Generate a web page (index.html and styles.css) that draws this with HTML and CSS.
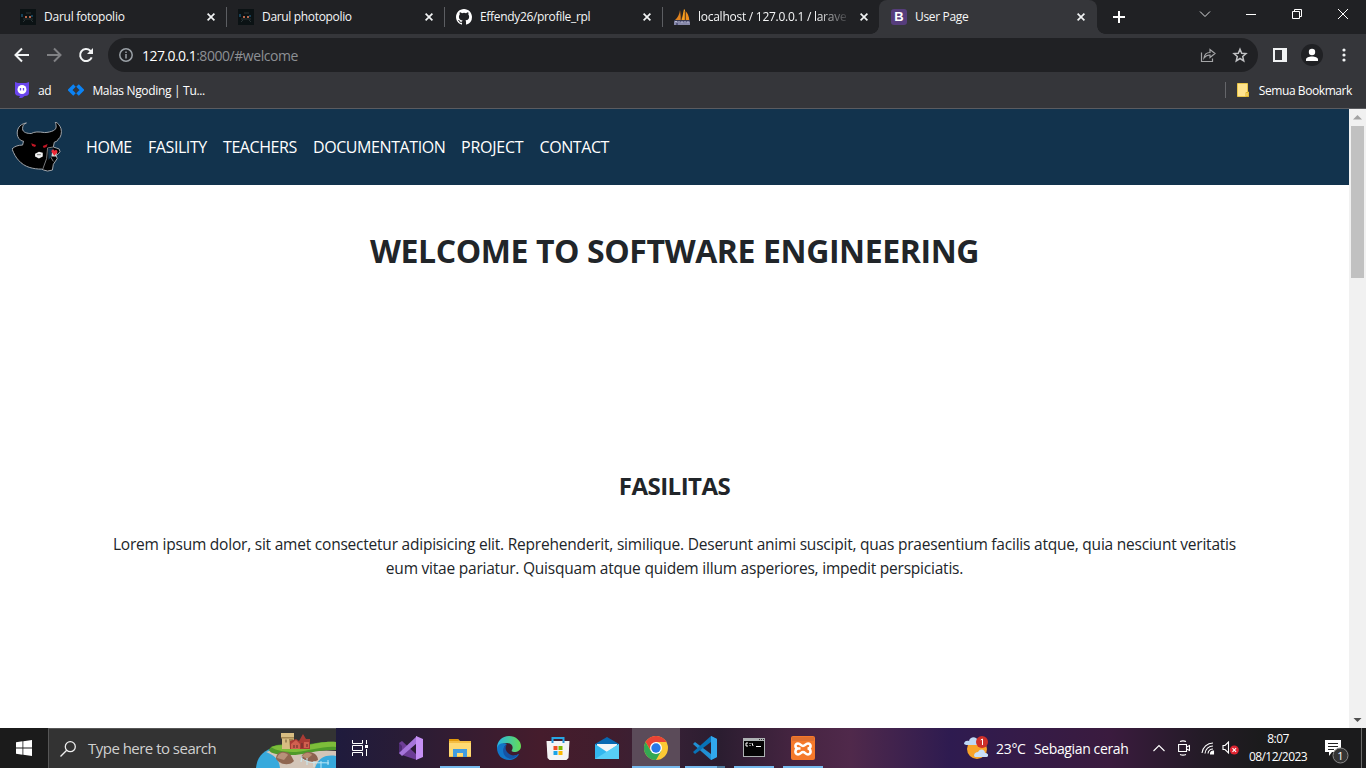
FILE: index.html
```html
<!DOCTYPE html>
<html lang="id">
<head>
<meta charset="utf-8">
<title>User Page</title>
<link rel="stylesheet" href="styles.css">
</head>
<body>
<div class="screen">
  <header class="tabstrip">
    <div class="tab">
      <svg class="favicon" viewBox="0 0 16 16"><rect width="16" height="16" fill="#0b1214"/><path d="M1 5v3h2V5zM11 6h2v2h-2z" fill="#174057"/><path d="M5 7h2v2H5zM9 7h2v2H9z" fill="#b5674c"/><path d="M3 10h10M3 13l2-2M13 13l-2-2M6 4h5" stroke="#2c3537" fill="none"/></svg>
      <span class="tab-title t-1">Darul fotopolio</span>
      <svg class="close" viewBox="0 0 8 8"><path d="M.6.6l6.8 6.8M7.4.6L.6 7.4"/></svg>
    </div>
    <div class="tab">
      <svg class="favicon" viewBox="0 0 16 16"><rect width="16" height="16" fill="#0b1214"/><path d="M1 5v3h2V5zM11 6h2v2h-2z" fill="#174057"/><path d="M5 7h2v2H5zM9 7h2v2H9z" fill="#b5674c"/><path d="M3 10h10M3 13l2-2M13 13l-2-2M6 4h5" stroke="#2c3537" fill="none"/></svg>
      <span class="tab-title t-2">Darul photopolio</span>
      <svg class="close" viewBox="0 0 8 8"><path d="M.6.6l6.8 6.8M7.4.6L.6 7.4"/></svg>
    </div>
    <div class="tab">
      <svg class="favicon" viewBox="0 0 16 16"><path fill="#fff" d="M8 0C3.58 0 0 3.58 0 8c0 3.54 2.29 6.53 5.47 7.59.4.07.55-.17.55-.38v-1.49c-2.01.37-2.53-.49-2.69-.94-.09-.23-.48-.94-.82-1.13-.28-.15-.68-.52-.01-.53.63-.01 1.08.58 1.23.82.72 1.21 1.87.87 2.33.66.07-.52.28-.87.51-1.07-1.78-.2-3.64-.89-3.64-3.95 0-.87.31-1.59.82-2.15-.08-.2-.36-1.02.08-2.12 0 0 .67-.21 2.2.82a7.6 7.6 0 014 0c1.53-1.04 2.2-.82 2.2-.82.44 1.1.16 1.92.08 2.12.51.56.82 1.27.82 2.15 0 3.07-1.87 3.75-3.65 3.95.29.25.54.73.54 1.48v2.2c0 .21.15.46.55.38A8.01 8.01 0 0016 8c0-4.42-3.58-8-8-8z"/></svg>
      <span class="tab-title t-3">Effendy26/profile_rpl</span>
      <svg class="close" viewBox="0 0 8 8"><path d="M.6.6l6.8 6.8M7.4.6L.6 7.4"/></svg>
    </div>
    <div class="tab no-sep">
      <svg class="favicon" viewBox="0 0 16 16"><path d="M6 1C5.500 5 4 8.500 1 11h6.500z" fill="#e08320"/><path d="M10 0C9 4 8.500 8 7.500 11H11V1z" fill="#f9a01f"/><path d="M11.500 2c2 2 3.500 5 3.800 9h-3.800z" fill="#ef8e1c"/><path d="M7 3v8M11.200 2v9" stroke="#503018" stroke-width=".7"/><path d="M0 11.500h16V16H0z" fill="#565980"/><path d="M1 16v-3.500h2V14M5 12v4M7 16v-3h2v3M11 12v4M13 16v-3h2v3" stroke="#b9bbd4" fill="none"/></svg>
      <span class="tab-title faded t-4">localhost / 127.0.0.1 / larave</span>
      <svg class="close" viewBox="0 0 8 8"><path d="M.6.6l6.8 6.8M7.4.6L.6 7.4"/></svg>
    </div>
    <div class="tab active">
      <span class="favicon bootstrap">B</span>
      <span class="tab-title t-5">User Page</span>
      <svg class="close" viewBox="0 0 8 8"><path d="M.6.6l6.8 6.8M7.4.6L.6 7.4"/></svg>
    </div>
    <svg class="new-tab" viewBox="0 0 12 12"><path d="M6 0v12M0 6h12" stroke="#fff" stroke-width="2"/></svg>
    <div class="window-buttons">
      <svg viewBox="0 0 46 28"><path d="M18 11.500l5 5 5-5" /></svg>
      <svg viewBox="0 0 46 28"><path d="M18 14.500h10" stroke="#fff"/></svg>
      <svg viewBox="0 0 46 28"><path d="M18.500 11.500h7v7h-7zM20.500 11V9.500h7v7H26" stroke="#fff"/></svg>
      <svg viewBox="0 0 46 28"><path d="M18 9l10 10M28 9L18 19" stroke="#fff"/></svg>
    </div>
  </header>

  <div class="toolbar">
    <svg class="nav-icon" viewBox="0 0 16 16"><path d="M15 8H2M8 1.500L1.500 8 8 14.500" stroke="#f1f3f4"/></svg>
    <svg class="nav-icon" viewBox="0 0 16 16"><path d="M1 8h13M8 1.500L14.500 8 8 14.500" stroke="#808184"/></svg>
    <svg class="nav-icon" viewBox="0 0 16 16"><path d="M13.700 10.300A6 6 0 1112.300 3.700L14 5.500" stroke="#f1f3f4"/><path d="M15 1v6H9z" fill="#f1f3f4" stroke="none"/></svg>
    <div class="omnibox">
      <svg class="info" viewBox="0 0 14 14"><circle cx="7" cy="7" r="6.200"/><path d="M7 6v4.500M7 3.500V5"/></svg>
      <span class="url"><b>127.0.0.1</b><i>:8000/#welcome</i></span>
      <svg class="share" viewBox="0 0 16 16"><path d="M1.500 5.500v9h11v-3M4 11c.5-4 2.500-5.500 6-5.500V2.500l5 4-5 4V8C7 8 5.500 9 4 11z"/></svg>
      <svg class="star" viewBox="0 0 16 16"><path d="M8 2.200l1.700 4 4.300.4-3.300 2.900 1 4.300L8 11.500l-3.700 2.300 1-4.300L2 6.600l4.300-.4z"/></svg>
    </div>
    <svg class="side-panel" viewBox="0 0 14 14"><path fill="#f1f3f4" fill-rule="evenodd" d="M0 0h14v14H0zM2 2v10h7V2z"/></svg>
    <svg class="profile" viewBox="0 0 22 22"><circle cx="11" cy="11" r="11" fill="#202124"/><circle cx="11" cy="8" r="3.200" fill="#fff"/><path d="M5 17v-1.500c0-4 12-4 12 0V17z" fill="#fff"/></svg>
    <svg class="dots" viewBox="0 0 4 14"><circle cx="2" cy="2" r="1.600"/><circle cx="2" cy="7" r="1.600"/><circle cx="2" cy="12" r="1.600"/></svg>
  </div>

  <div class="bookmarks">
    <svg class="bm-ad" viewBox="0 0 16 16"><path d="M1 0l3 1h8l3-1v11c0 2-1.500 3-4 3-1 0-2 2-4 2H5l1-2c-3 0-5-1-5-3z" fill="#6a45ee"/><circle cx="8" cy="7.500" r="4.500" fill="#fff"/><path d="M6.500 6v2.500M9.500 6v2.500" stroke="#6a45ee" stroke-width="1.300"/></svg>
    <span class="bm-text b-1">ad</span>
    <svg class="bm-mn" viewBox="0 0 16 12"><path d="M6.500 1.500L2 6l4.500 4.500M9.500 1.500L14 6l-4.500 4.500" stroke="#0b83f5" stroke-width="3.600" fill="none"/></svg>
    <span class="bm-text b-2">Malas Ngoding | Tu...</span>
    <div class="all-bookmarks">
      <svg class="folder" viewBox="0 0 12 14"><path d="M.5.5h10V9h1v4.500H.5z" fill="#ffe48f" stroke="#e9c649"/><path d="M9 13.500V9.500h2v4z" fill="#ffe48f" stroke="#e0b52d"/></svg>
      <span class="bm-text b-3">Semua Bookmark</span>
    </div>
  </div>

  <div class="viewport">
    <main class="page">
      <nav class="navbar">
        <svg class="brand" viewBox="0 0 52 52">
          <path d="M15 1C7 2 4 9 6 15c1 3 4 5 6 5l-1 4c-4 0-8 1-11 4 2 5 4 9 7 12 6 7 15 9 24 9l2 1 4 1 5-1 1-6 4-6-1-3 4-4-1-3-3-1-3-1 1-5c3-1 4-2 4-3 3-2 4-7 3-11-1-3-3-6-6-7 1 4 2 7-2 9-2 1-6 2-9 2-6-1-11-1-14 1-4 0-9-1-9-5 0-3 1-5 4-6z" fill="#000" stroke="#a7abb0" stroke-width="1"/>
          <path d="M20 22l5 2-1 2-3-1zM37 23l-5 2 1 2 3-1z" fill="#c01724"/>
          <path d="M24 33l4-2 4 1v4l-4 2-4-2z" fill="#f0f0f0"/><path d="M26 34h4" stroke="#777"/>
          <path d="M43 26l-6 1-1 11-4 11M40 36l3 5" stroke="#9a9da1" stroke-width=".8" fill="none"/>
          <path d="M37.500 27.500h5.500l-1 7-4 5z" fill="#12334d"/>
          <path d="M41 36l1-6 5 1-1 5z" fill="#d8d8d8"/><path d="M41 31c0-3 3-3 3-1 2-2 4 0 3 2l-3 3z" fill="#ef2936"/>
        </svg>
        <a class="n-1">HOME</a>
        <a class="n-2">FASILITY</a>
        <a class="n-3">TEACHERS</a>
        <a class="n-4">DOCUMENTATION</a>
        <a class="n-5">PROJECT</a>
        <a class="n-6">CONTACT</a>
      </nav>
      <h1><span>WELCOME TO SOFTWARE ENGINEERING</span></h1>
      <h2><span>FASILITAS</span></h2>
      <p><span class="p-1">Lorem ipsum dolor, sit amet consectetur adipisicing elit. Reprehenderit, similique. Deserunt animi suscipit, quas praesentium facilis atque, quia nesciunt veritatis</span><br><span class="p-2">eum vitae pariatur. Quisquam atque quidem illum asperiores, impedit perspiciatis.</span></p>
    </main>
    <div class="scrollbar">
      <svg viewBox="0 0 17 17"><path d="M4 10.500h9L8.500 6z" fill="#a3a3a3"/></svg>
      <div class="thumb"></div>
      <svg class="down" viewBox="0 0 17 17"><path d="M4.500 7h8L8.500 11z" fill="#505050"/></svg>
    </div>
  </div>

  <footer class="taskbar">
    <div class="start"><svg viewBox="0 0 16 16"><path fill="#fff" d="M0 2.200L6.500 1.300v6.300H0zM7.300 1.200L16 0v7.600H7.300zM0 8.400h6.500v6.300L0 13.800zM7.300 8.400H16V16l-8.700-1.200z"/></svg></div>
    <div class="search">
      <svg class="lens" viewBox="0 0 16 16"><circle cx="10.300" cy="5.700" r="5"/><path d="M6.700 9.300L.5 15.500"/></svg>
      <span class="search-text">Type here to search</span>
      <svg class="castle" viewBox="0 0 80 38">
        <path d="M0 38C1 27 7 20 20 17l60 7v14z" fill="#37a9dc"/>
        <path d="M10 22c8-3 14-1 24 0 16 1 30-3 46-1v5c-12-2-18 3-21 12H24C23 30 20 26 10 22z" fill="#d3c5b8"/>
        <path d="M13 20c2-6 14-6 25-5 14 1 24-4 42-3v8c-18-1-30 5-46 5-10 0-20-1-21-5z" fill="#4f9a2b"/>
        <path d="M15 17c9-4 22 0 33-1 12-2 20-5 32-4v5c-14-1-26 4-40 5-10 0-20-1-25-5z" fill="#7dbd3a"/>
        <path d="M25 3h13v5l-1 11H26V8l-1-1z" fill="#d8bd82"/><path d="M25 7h13v1.500H25zM33 9h4v10h-3z" fill="#a38650"/><path d="M30 9.500v3" stroke="#6b5430"/>
        <path d="M34 11l6-2 3 2 4-7 3 5h4v10H34z" fill="#a93b34"/><path d="M35 14l5-4 4 4v5h-9zM48 12h5v6h-5z" fill="#d0604f"/><path d="M38 18v-3M41 18v-3M46 18v-5M51 17v-3" stroke="#632e2b"/>
        <path d="M20 29c0-6 5-8 9-7 5 0 7 5 9 9-4 5-14 4-18-2z" fill="#8f6650"/><path d="M21 28c2-7 9-6 11-3l-4 5z" fill="#b8917a"/>
        <path d="M45 28c1-6 8-7 12-5 3 1 5 4 5 7-5 3-13 2-17-2z" fill="#8d6350"/><path d="M46 26c4-5 9-3 10-1l-5 4z" fill="#b98b70"/>
        <path d="M46 26l-1 6M51 28v7M58 31v6M65 31v7M72 30v5M45 28c10 7 17 4 28 5" stroke="#c8edf8" stroke-width=".9" fill="none"/>
      </svg>
    </div>
    <div class="task view"><svg width="18" height="16" viewBox="0 0 18 16"><path d="M1.500 0v3.500h10V0M1.500 16v-3.500h10V16M1.500 5.500h10v5h-10zM15.500 0v4M15.500 9v7" stroke="#fff" fill="none"/><path d="M14 5h3v3h-3z" fill="#fff"/></svg></div>
    <div class="apps">
      <div class="task"><svg viewBox="0 0 24 24"><path d="M0 7l3-2 15 14v5L3 19l-3-2z" fill="#6d3d96"/><path d="M0 7l3 3v5l-3 3z" fill="#4f2b74"/><path d="M0 17L18 0v7L3 20z" fill="#a675da"/><path d="M17 0l7 3v18l-7 3z" fill="#c690f5"/></svg></div>
      <div class="task"><svg viewBox="0 0 24 24"><path d="M1 3h9l2 2h11v16H1z" fill="#f5be43"/><path d="M1 3h9l1 2H1z" fill="#e29a0b"/><path d="M1 7h22v13H1z" fill="#ffda73"/><path d="M5 21v-8h14v8h-4v-4H9v4z" fill="#419ce0"/></svg><i></i></div>
      <div class="task"><svg viewBox="0 0 24 24"><defs><linearGradient id="edge" x2="1"><stop stop-color="#27b5e7"/><stop offset="1" stop-color="#65dc55"/></linearGradient></defs><path d="M0 12C0 5 5 0 12 0s12 5 12 10c0 4-3 6-7 6-2 0-3-1-2-2 2-4-1-7-5-7C5 7 1 10 0 14z" fill="url(#edge)"/><path d="M0 12c1-4 5-6 10-4-4 2-3 7 0 10 4 3 8 2 12 0-2 4-6 6-10 6C5 24 0 19 0 12z" fill="#1176c8"/><path d="M10 8c-5 3-5 9-1 13 4 3 9 2 13-3-4 2-8 2-11-1s-3-6-1-9z" fill="#1553a4"/></svg></div>
      <div class="task"><svg viewBox="0 0 24 24"><path d="M6.500 6V2h11v4" fill="none" stroke="#27a6e4" stroke-width="2"/><path d="M.5 5h23l-1 17-2 2h-17l-2-2z" fill="#f4f4f4"/><path d="M5.500 5h2v2h-2zM16.500 5h2v2h-2z" fill="#2695db"/><path d="M7.500 10h4v4h-4z" fill="#ef4c23"/><path d="M12.500 10h4v4h-4z" fill="#7fb900"/><path d="M7.500 15h4v4h-4z" fill="#1ba4e8"/><path d="M12.500 15h4v4h-4z" fill="#fdb900"/></svg></div>
      <div class="task"><svg viewBox="0 0 24 24"><path d="M0 8l12-7 12 7v7H0z" fill="#0768b2"/><path d="M2 8h20v8H2z" fill="#f1f4f7"/><path d="M0 8l12 8 12-8v15H0z" fill="#32b7ef"/><path d="M0 23L24 8v15z" fill="#57cef7"/></svg></div>
      <div class="task current"><svg viewBox="0 0 24 24"><circle cx="12" cy="12" r="12" fill="#fcc934"/><path d="M1.600 6A12 12 0 0122.400 6H12L7 15z" fill="#e94335"/><path d="M1.600 6A12 12 0 0012 24l5.200-9H6.800z" fill="#34a853"/><circle cx="12" cy="12" r="6" fill="#fff"/><circle cx="12" cy="12" r="4.700" fill="#2878e8"/></svg><i></i></div>
      <div class="task double"><svg viewBox="0 0 24 24"><path d="M18 0l6 3v18l-6 3L0 8l2-2 16 12z" fill="#218fd3"/><path d="M0 16L18 0v6L2 18z" fill="#0873b8"/><path d="M18 0l6 3v18l-6 3z" fill="#31a7ec"/></svg><i></i></div>
      <div class="task"><svg viewBox="0 0 24 24"><path d="M1 2h22v19H1z" fill="#aeb3b4"/><path d="M2 5h20v15H2z" fill="#050505"/><path d="M17 3.500h1M19 3.500h1M21 3.500h1" stroke="#333"/><path d="M6 7H4v3h2M8 7v1M8 9v1M10 7l1 3M14 10.500h5" stroke="#fff" fill="none"/></svg><i></i></div>
      <div class="task"><svg viewBox="0 0 24 24"><rect width="24" height="24" rx="2" fill="#f5792b"/><path d="M1 1h22v4H1z" fill="#df702f"/><path d="M9.500 12.500H7.500C3.500 12.500 3.500 7.500 7 7.500c2.500 0 3 2.500 5 2.500s2.500-2.500 5-2.500c3.500 0 3.500 5-.5 5 4 0 4 6 .5 6-2.500 0-3-2.500-5-2.500s-2.500 2.500-5 2.500c-3.500 0-3.500-6 .5-6" fill="none" stroke="#fff" stroke-width="2.600"/></svg><i></i></div>
    </div>
    <div class="weather">
      <svg viewBox="0 0 24 24"><circle cx="13" cy="13" r="10" fill="#f8a329"/><path d="M0 8c0-3 3-4 5-3 1-5 8-5 9 0 3 0 4 3 2 4H2z" fill="#bfd8f4"/><path d="M10 20c0-3 2-4 4-4 2-4 7-3 7 1 4 0 4 4 1 4H11z" fill="#cae0f8"/><circle cx="18" cy="6" r="6" fill="#cf3029"/><path d="M16.800 4l1.700-1v6" stroke="#fff" fill="none"/></svg>
      <span class="temp">23°C</span><span class="cond">Sebagian cerah</span>
    </div>
    <div class="tray">
      <svg class="chev" viewBox="0 0 12 8"><path d="M.5 7L6 1.500 11.500 7"/></svg>
      <svg class="cam" viewBox="0 0 12 16"><path d="M2 1.500Q5 .3 8 1.500M2 14.500q3 1.200 6 0M.6 4.500h7.900v7H.6zM8.500 7l3-1.500v5l-3-1.500" /></svg>
      <svg class="wifi" viewBox="0 0 14 14"><path d="M1 12A11 11 0 0112 2M4 12.500a8 8 0 018-7.500M7 12.500a5 5 0 015-4.500"/><path d="M9.500 13a3 3 0 013-3v3z" fill="#fff"/></svg>
      <svg class="sound" viewBox="0 0 17 14"><path d="M1 4.500h2L6.500 1v11L3 8.500H1z"/><circle cx="12.300" cy="9" r="4.500" fill="#df2431" stroke="none"/><path d="M10.500 7.200l3.600 3.600M14.100 7.200l-3.600 3.600"/></svg>
    </div>
    <div class="clock"><span class="c-1">8:07</span><span class="c-2">08/12/2023</span></div>
    <div class="notice"><svg viewBox="0 0 24 24"><path d="M0 0h16v12H7l-3 4v-4H0z" fill="#fff"/><path d="M3 3.500h10M3 6.500h10M3 9.500h6" stroke="#222"/><circle cx="15.500" cy="15.500" r="7.500" fill="#343434" stroke="#898989"/></svg><b>1</b></div>
    <div class="peek"></div>
  </footer>
</div>
</body>
</html>
```
FILE: styles.css
```css
* { box-sizing: border-box; }
body { margin: 0; font-family: "Open Sans", "Noto Sans", sans-serif; }
svg { display: block; flex: none; }
.screen { width: 1366px; height: 768px; display: flex; flex-direction: column; overflow: hidden; white-space: nowrap; }

/* Tabs */
.tabstrip { height: 34px; background: #202124; display: flex; align-items: center; padding-left: 8px; flex: none; }
.tab { width: 218px; height: 34px; display: flex; align-items: center; padding: 0 11px 0 12px; position: relative; flex: none; color: #f5f6f7; font-size: 12px; }
.tab::after { content: ""; position: absolute; right: -1px; top: 7px; width: 1px; height: 20px; background: #5c5e62; }
.tab.no-sep::after { display: none; }
.favicon { width: 16px; height: 16px; margin-right: 8px; flex: none; }
.tab-title { width: 148px; flex: none; line-height: 20px; letter-spacing: -0.25px; }
.t-2, .t-3 { letter-spacing: -0.33px; }
.t-4 { letter-spacing: -0.26px; }
.t-5 { letter-spacing: -0.33px; width: 147px; }
.faded { -webkit-mask-image: linear-gradient(90deg, #000 80%, rgba(0, 0, 0, .15)); mask-image: linear-gradient(90deg, #000 80%, rgba(0, 0, 0, .15)); }
.close { width: 8px; height: 8px; margin-left: 15px; stroke: #f1f3f4; stroke-width: 1.7; }
.no-sep .close { margin-left: 14px; }
.tab.active { background: #35363a; border-radius: 8px 8px 0 0; margin-left: -1px; width: 218px; }
.tab.active .close { margin-left: 15px; }
.tab.active::before, .tab.active::after { content: ""; display: block; position: absolute; top: auto; bottom: 0; width: 8px; height: 8px; background: radial-gradient(circle at 0 0, transparent 7.5px, #35363a 8px); left: -8px; }
.tab.active::after { left: auto; right: -8px; background: radial-gradient(circle at 100% 0, transparent 7.5px, #35363a 8px); }
.bootstrap { background: #563d7c; border-radius: 3px; color: #fff; font: bold 13px/16px "Liberation Sans", sans-serif; text-align: center; }
.new-tab { width: 12px; height: 12px; margin-left: 16px; }
.window-buttons { margin-left: auto; display: flex; align-self: flex-start; }
.window-buttons svg { width: 46px; height: 28px; fill: none; stroke: #dadbdd; }

/* Toolbar */
.toolbar { height: 42px; background: #35363a; display: flex; align-items: center; padding-left: 14px; flex: none; }
.nav-icon { width: 16px; height: 16px; margin-right: 16px; fill: none; stroke-width: 2; }
.omnibox { width: 1150px; height: 34px; border-radius: 17px; background: #202124; margin-left: -2px; display: flex; align-items: center; padding: 0 10px 0 11px; flex: none; }
.info { width: 14px; height: 14px; stroke: #9aa0a6; stroke-width: 1.5; fill: none; }
.url { margin-left: 9px; font-size: 14px; }
.url b { font-weight: 400; color: #fff; letter-spacing: -0.55px; }
.url i { font-style: normal; color: #8d9094; letter-spacing: -0.45px; }
.share { width: 16px; height: 16px; margin-left: auto; fill: none; stroke: #a4a5a7; stroke-width: 1.2; }
.star { width: 16px; height: 16px; margin-left: 16px; fill: none; stroke: #c1c2c4; stroke-width: 1.5; }
.side-panel { width: 14px; height: 14px; margin-left: 15px; }
.profile { width: 22px; height: 22px; margin-left: 14px; }
.dots { width: 4px; height: 14px; margin-left: 19px; fill: #f1f3f4; }

/* Bookmarks */
.bookmarks { height: 33px; background: #35363a; border-bottom: 1px solid #5b5c60; display: flex; align-items: center; padding: 0 14px 4px; flex: none; }
.bm-text { color: #fff; font-size: 12px; letter-spacing: -0.32px; }
.b-3 { letter-spacing: -0.42px; }
.bm-ad { width: 16px; height: 16px; margin-right: 8px; }
.bm-mn { width: 16px; height: 12px; margin: 0 8px 0 17px; }
.all-bookmarks { margin-left: auto; height: 16px; border-left: 1px solid #65666a; display: flex; align-items: center; padding-left: 11px; }
.folder { width: 12px; height: 14px; margin-right: 10px; }

/* Page */
.viewport { height: 619px; display: flex; flex: none; background: #fff; }
.page { width: 1349px; color: #212529; text-align: center; }
.navbar { height: 76px; background: #12334d; display: flex; align-items: center; padding-left: 12px; }
.brand { width: 50px; height: 50px; margin-right: 24px; }
.navbar a { color: #fff; font-size: 16px; margin-right: 16px; text-align: left; letter-spacing: -0.42px; flex: none; }
.n-1 { width: 46px; }
.n-2 { width: 59px; }
.n-3 { width: 74px; }
.n-4 { width: 132px; }
.n-5 { width: 62.5px; }
.navbar .n-5 { letter-spacing: -0.25px; }
h1, h2, p { margin: 0; }
h1 { font-size: 32px; line-height: 38px; padding-top: 47px; font-weight: 700; letter-spacing: -0.4px; }
h2 { font-size: 24px; line-height: 29px; padding-top: 201px; font-weight: 700; letter-spacing: -0.5px; }
p { font-size: 15.5px; line-height: 24px; padding-top: 32px; letter-spacing: -0.22px; }
.scrollbar { width: 17px; background: #f1f1f1; display: flex; flex-direction: column; }
.scrollbar svg { width: 17px; height: 17px; }
.thumb { width: 13px; height: 152px; margin-left: 2px; background: #c1c1c1; }
.scrollbar .down { margin-top: auto; }

/* Taskbar */
.taskbar { height: 40px; display: flex; flex: none; background: linear-gradient(90deg, #1b1b1b 0, #1b1b1b 48px, #1f1b3d 336px, #2a1c35 410px, #451c2c 540px, #411d2d 600px, #382136 660px, #2b1d30 720px, #442440 790px, #50294b 850px, #2e1b50 950px, #351b48 1020px, #3a1b3e 1110px, #241b27 1200px, #1b1b1c 1260px); }
.start { width: 48px; display: flex; align-items: center; justify-content: center; }
.start svg { width: 16px; height: 16px; }
.search { width: 288px; height: 40px; background: #333; border: 1px solid #565656; border-width: 1px 0 0 1px; display: flex; align-items: center; padding-left: 11px; overflow: hidden; }
.lens { width: 16px; height: 16px; fill: none; stroke: #eee; stroke-width: 1.3; }
.search-text { color: #d0d0d0; font-size: 15px; margin-left: 12px; letter-spacing: -0.52px; padding-bottom: 2px; }
.castle { width: 80px; height: 38px; margin-left: auto; align-self: flex-end; }
.task { width: 48px; height: 40px; display: flex; align-items: center; justify-content: center; position: relative; }
.apps { display: flex; gap: 1px; margin-left: 3px; }
.apps svg { width: 24px; height: 24px; }
.task i { position: absolute; bottom: 0; left: 4px; width: 40px; height: 2px; background: #76b9ed; }
.task.current { background: #5b4b59; }
.task.current i { left: 0; width: 48px; }
.task.double i { background: linear-gradient(90deg, #76b9ed 32px, #4f7a9d 32px); }
.weather { display: flex; align-items: center; margin-left: 137px; color: #fff; font-size: 14px; }
.weather svg { width: 24px; height: 24px; }
.temp { margin-left: 8px; width: 38px; letter-spacing: -0.3px; }
.cond { width: 96px; letter-spacing: -0.38px; }
.tray { display: flex; align-items: center; width: 94px; margin-left: 23px; flex: none; }
.tray svg { fill: none; stroke: #fff; stroke-width: 1.1; }
.chev { width: 12px; height: 8px; }
.cam { width: 12px; height: 16px; margin-left: 13px; }
.wifi { width: 14px; height: 14px; margin-left: 11px; }
.sound { width: 17px; height: 14px; margin-left: 7px; }
.clock { width: 62px; flex: none; display: flex; flex-direction: column; align-items: center; color: #fff; font-size: 12px; line-height: 18px; padding-top: 2px; letter-spacing: -0.55px; }
.notice { position: relative; margin: 12px 0 0 16px; width: 24px; height: 24px; flex: none; }
.notice svg { width: 24px; height: 24px; }
.notice b { position: absolute; left: 8px; top: 8px; width: 15px; text-align: center; font-size: 11px; line-height: 15px; color: #fff; font-weight: 400; }
.peek { margin-left: auto; width: 5px; border-left: 1px solid #6a6a6a; }
```
